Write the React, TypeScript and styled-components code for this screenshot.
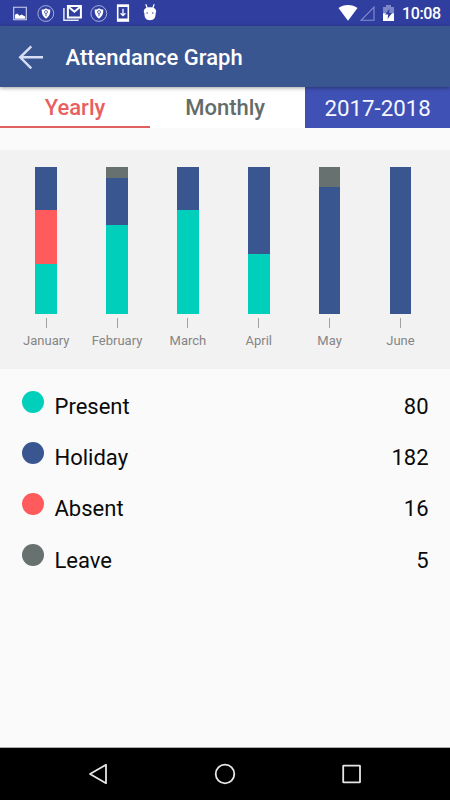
import React from 'react';
import styled, { createGlobalStyle } from 'styled-components';

const colors = {
  present: '#00d0bb',
  holiday: '#3a5691',
  absent: '#ff5a5c',
  leave: '#667170',
};
type Kind = keyof typeof colors;

const GlobalStyle = createGlobalStyle`
  body { margin: 0; background: #fafafa; }
  * { box-sizing: border-box; }
`;

const Screen = styled.div`
  width: 450px;
  height: 800px;
  display: flex;
  flex-direction: column;
  overflow: hidden;
  background: #fafafa;
  font-family: Roboto, sans-serif;
  color: #0a0a0a;
`;

const StatusBar = styled.div`
  height: 26px;
  flex: none;
  display: flex;
  align-items: flex-start;
  justify-content: space-between;
  background: #303f9f;
  color: #fff;
  padding: 0 9px 0 12px;
  svg { display: block; }
`;

const Notifications = styled.div`
  display: flex;
  gap: 8px;
  svg:last-child { margin-left: 5px; }
`;

const System = styled.div`
  display: flex;
`;

const Clock = styled.span`
  width: 39px;
  margin-left: 5px;
  font-size: 16px;
  font-weight: 500;
  line-height: 28px;
  white-space: nowrap;
  letter-spacing: -0.35px;
`;

const AppBar = styled.header`
  height: 61px;
  flex: none;
  display: flex;
  align-items: center;
  padding-left: 17px;
  background: #3a5691;
  color: #fff;
  box-shadow: 0 1px 4px rgba(0, 0, 0, 0.38);
  z-index: 1;
`;

const BackButton = styled.button`
  border: 0;
  padding: 0;
  background: none;
  width: 28px;
  height: 28px;
  svg { display: block; }
`;

const Title = styled.h1`
  margin: 2px 0 0 20.5px;
  font-size: 22px;
  font-weight: 500;
  line-height: 30px;
  white-space: nowrap;
`;

const Tabs = styled.nav`
  height: 41px;
  flex: none;
  display: grid;
  grid-template-columns: 150px 155.4px 1fr;
  background: #fff;
`;

const Tab = styled.button<{ $active?: boolean }>`
  border: 0;
  padding: 3px ${p => (p.$active ? 0 : 5)}px 0 0;
  background: #fff;
  font: 500 22px/36px Roboto, sans-serif;
  color: ${p => (p.$active ? '#e75f60' : '#626c69')};
  border-bottom: 2px solid ${p => (p.$active ? '#e05f60' : '#fff')};
`;

const YearPicker = styled.button`
  border: 0;
  padding: 2px 0 0;
  background: #3f51b5;
  color: #f5f6ff;
  font: 400 22.3px/39px Roboto, sans-serif;
`;

const Chart = styled.section`
  height: 219px;
  flex: none;
  margin-top: 22px;
  padding: 17px 14px 0 10.8px;
  display: grid;
  grid-template-columns: repeat(6, 70.85px);
  background: #f2f2f2;
`;

const Month = styled.div`
  display: flex;
  flex-direction: column;
  align-items: center;
`;

const Bar = styled.div`
  width: 21.5px;
  height: 147px;
  display: flex;
  flex-direction: column;
`;

const Segment = styled.div<{ $kind: Kind; $size: number }>`
  flex: ${p => p.$size} 0 0;
  background: ${p => colors[p.$kind]};
`;

const Tick = styled.div`
  width: 1px;
  height: 10px;
  margin-top: 4px;
  background: #a2a2a2;
`;

const MonthLabel = styled.span`
  margin-top: 4px;
  font-size: 13px;
  line-height: 18px;
  color: #858585;
`;

const Legend = styled.ul`
  list-style: none;
  margin: 0;
  padding: 11px 21.5px 0;
  flex: 1;
`;

const LegendRow = styled.li`
  height: 51.2px;
  display: flex;
  align-items: flex-start;
  font-size: 22px;
  line-height: 32px;
  padding-top: 11px;
`;

const Dot = styled.span<{ $kind: Kind }>`
  width: 22px;
  height: 22px;
  margin-top: -0.5px;
  border-radius: 50%;
  background: ${p => colors[p.$kind]};
`;

const LegendName = styled.span`
  margin-left: 11px;
  flex: 1;
`;

const NavBar = styled.footer`
  height: 53px;
  flex: none;
  border-top: 1px solid #aaa;
  background: #000;
  display: flex;
  justify-content: space-between;
  align-items: center;
  padding: 0 86px;
  svg { display: block; }
`;

const ShieldIcon = () => (
  <svg width="18" height="26" viewBox="0 0 18 26" fill="none">
    <circle cx="8.8" cy="13.5" r="7.9" stroke="#b4bbe4" strokeWidth="0.9" />
    <path d="M9 8.3c1.2 1 2.8 1.3 4.3 1.2.2 4.3-1.2 7.3-4.3 9.3-3.1-2-4.5-5-4.3-9.3 1.5.1 3.1-.2 4.3-1.2z" fill="#fff" />
    <circle cx="9" cy="12" r="1.5" stroke="#5360ad" strokeWidth="0.9" />
    <path d="M9 13.5v2.7" stroke="#5360ad" />
  </svg>
);

const months: { name: string; parts: [Kind, number][] }[] = [
  { name: 'January', parts: [['holiday', 43.3], ['absent', 54], ['present', 49.7]] },
  { name: 'February', parts: [['leave', 11], ['holiday', 46.5], ['present', 89.5]] },
  { name: 'March', parts: [['holiday', 43.3], ['present', 103.7]] },
  { name: 'April', parts: [['holiday', 87], ['present', 60]] },
  { name: 'May', parts: [['leave', 19.5], ['holiday', 127.5]] },
  { name: 'June', parts: [['holiday', 147]] },
];

const totals: { name: string; kind: Kind; value: number }[] = [
  { name: 'Present', kind: 'present', value: 80 },
  { name: 'Holiday', kind: 'holiday', value: 182 },
  { name: 'Absent', kind: 'absent', value: 16 },
  { name: 'Leave', kind: 'leave', value: 5 },
];

export default function App() {
  return (
    <Screen>
      <GlobalStyle />
      <StatusBar>
        <Notifications>
          <svg width="17" height="26" viewBox="0 0 17 26">
            <path d="M1.7 7.2h12.6v12.6H1.7z" fill="none" stroke="#cdd2ee" strokeWidth="1.1" />
            <path d="M3 18.7v-4l2.3-1.2 2.2 2.2 2-1.2 3.7 2v2.2z" fill="#fff" />
          </svg>
          <ShieldIcon />
          <svg width="19" height="26" viewBox="0 0 19 26" fill="none">
            <path d="M.9 8v12.3h14.8" stroke="#e4e7f7" strokeWidth="1.5" />
            <path d="M4.9 17.5V6.1h13v11.4z" stroke="#fff" strokeWidth="2" />
            <path d="M5.5 6.8l5.9 5 5.900-5" stroke="#fff" strokeWidth="2" />
          </svg>
          <ShieldIcon />
          <svg width="14" height="26" viewBox="0 0 14 26" fill="none">
            <path d="M.9 4.300h12.200v17.500H.9z" fill="#fff" />
            <path d="M2.500 7h9v11.500h-9z" fill="#303f9f" />
            <path d="M7 8.700v6.500M4.600 13.200L7 15.600l2.400-2.400" stroke="#fff" strokeWidth="1.300" />
          </svg>
          <svg width="14" height="26" viewBox="0 0 14 26">
            <path d="M2.800 4.300l1.500 4M11.200 4.300l-1.500 4" stroke="#fff" strokeWidth="1.200" />
            <path d="M.8 11.500C1 8.500 3.500 7.200 7 7.200s6 1.300 6.200 4.300c.1.800-.6 1.200-.6 2 0 4.500-1.600 6.700-5.600 6.700s-5.600-2.200-5.600-6.700c0-.8-.7-1.200-.6-2z" fill="#fff" />
            <circle cx="4.200" cy="13" r=".8" fill="#4a56a5" />
            <circle cx="9.800" cy="13" r=".8" fill="#4a56a5" />
          </svg>
        </Notifications>
        <System>
          <svg width="20" height="26" viewBox="0 0 20 26">
            <path d="M.5 8C5.500 4 14.500 4 19.500 8L10 20.700z" fill="#fff" />
          </svg>
          <svg width="17" height="26" viewBox="0 0 17 26">
            <path d="M3 20.300L16 7v13.300z" fill="none" stroke="#858fcf" strokeWidth="1.100" />
          </svg>
          <svg width="22" height="26" viewBox="0 0 22 26">
            <path d="M11 5h5v2h3v14H8V7h3z" fill="#7c87c7" />
            <path d="M8 13.300h11V21H8z" fill="#fff" />
            <path d="M14.500 8.500l-4.300 6h3L12.500 19l4.600-6h-3z" fill="#303f9f" />
          </svg>
          <Clock>10:08</Clock>
        </System>
      </StatusBar>

      <AppBar>
        <BackButton aria-label="Back">
          <svg width="28" height="28" viewBox="0 0 28 28" fill="none" stroke="#d6def5" strokeWidth="2.400">
            <path d="M26 14.300H3.500M14.300 3.300L3.200 14.300l11.100 11" />
          </svg>
        </BackButton>
        <Title>Attendance Graph</Title>
      </AppBar>

      <Tabs>
        <Tab $active>Yearly</Tab>
        <Tab>Monthly</Tab>
        <YearPicker>2017-2018</YearPicker>
      </Tabs>

      <Chart>
        {months.map(month => (
          <Month key={month.name}>
            <Bar>
              {month.parts.map(([kind, size]) => (
                <Segment key={kind} $kind={kind} $size={size} />
              ))}
            </Bar>
            <Tick />
            <MonthLabel>{month.name}</MonthLabel>
          </Month>
        ))}
      </Chart>

      <Legend>
        {totals.map(total => (
          <LegendRow key={total.name}>
            <Dot $kind={total.kind} />
            <LegendName>{total.name}</LegendName>
            <span>{total.value}</span>
          </LegendRow>
        ))}
      </Legend>

      <NavBar>
        <svg width="24" height="24" viewBox="0 0 24 24">
          <path d="M20 2.800v18.400L4 12z" fill="none" stroke="#e6e6e6" strokeWidth="1.800" strokeLinejoin="round" />
        </svg>
        <svg width="24" height="24" viewBox="0 0 24 24">
          <circle cx="12" cy="12" r="9.300" fill="none" stroke="#e6e6e6" strokeWidth="1.800" />
        </svg>
        <svg width="24" height="24" viewBox="0 0 24 24">
          <rect x="3.200" y="3.600" width="16.800" height="16.800" rx=".5" fill="none" stroke="#e6e6e6" strokeWidth="1.800" />
        </svg>
      </NavBar>
    </Screen>
  );
}
